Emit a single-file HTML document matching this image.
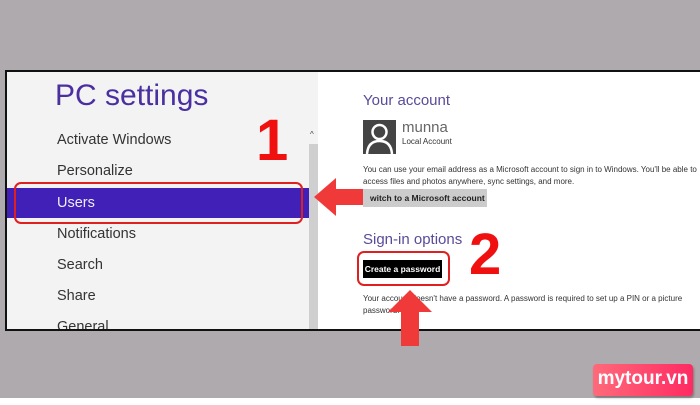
<!DOCTYPE html><html><head><style>
body{margin:0;width:700px;height:405px;background:#afaaae;position:relative;overflow:hidden;font-family:"Liberation Sans",sans-serif}
.a{position:absolute}
</style></head><body>
<div class="a" style="left:0;top:398px;width:700px;height:7px;background:#fff"></div>
<div class="a" style="left:5px;top:70px;width:695px;height:261px;border:2px solid #111;border-right:none;background:#fff;box-sizing:border-box"></div>
<div class="a" style="left:7px;top:72px;width:311px;height:257px;background:#f3f3f3"></div>
<div class="a" style="left:309px;top:144px;width:9px;height:185px;background:#cfcfcf"></div>
<div class="a" style="left:310px;top:130px;font-size:8px;color:#444">^</div>
<div class="a" style="left:55px;top:79px;font-size:30px;color:#4a2fa0">PC settings</div>
<div class="a" style="left:7px;top:188px;width:302px;height:30px;background:#4120b8"></div>
<div class="a" style="left:14px;top:182px;width:289px;height:42px;border:2px solid #e02020;border-radius:7px;box-sizing:border-box"></div>
<div class="a" style="left:57px;top:133px;font-size:14.5px;color:#333;line-height:1">Activate Windows</div>
<div class="a" style="left:57px;top:164px;font-size:14.5px;color:#333;line-height:1">Personalize</div>
<div class="a" style="left:57px;top:196px;font-size:14.5px;color:#eee;line-height:1">Users</div>
<div class="a" style="left:57px;top:227px;font-size:14.5px;color:#333;line-height:1">Notifications</div>
<div class="a" style="left:57px;top:258px;font-size:14.5px;color:#333;line-height:1">Search</div>
<div class="a" style="left:57px;top:289px;font-size:14.5px;color:#333;line-height:1">Share</div>
<div class="a" style="left:57px;top:320px;font-size:14.5px;color:#333;line-height:1;height:9px;overflow:hidden">General</div>
<div class="a" style="left:256px;top:112px;font-size:58px;font-weight:bold;color:#f01010;line-height:1">1</div>
<div class="a" style="left:469px;top:226px;font-size:58px;font-weight:bold;color:#f01010;line-height:1">2</div>
<svg class="a" style="left:312px;top:176px" width="62" height="42"><polygon points="2,21 24,2 24,13 60,13 60,29 24,29 24,40" fill="#f03a3a"/></svg>
<div class="a" style="left:363px;top:92px;font-size:15px;color:#5a4a9a">Your account</div>
<svg class="a" style="left:363px;top:120px" width="33" height="34"><rect width="33" height="34" fill="#444"/><circle cx="16.5" cy="12" r="7" fill="none" stroke="#fff" stroke-width="2.5"/><path d="M4 34 Q5 21 16.5 21 Q28 21 29 34" fill="none" stroke="#fff" stroke-width="2.5"/></svg>
<div class="a" style="left:402px;top:119px;font-size:15px;color:#666">munna</div>
<div class="a" style="left:402px;top:137px;font-size:8px;color:#333">Local Account</div>
<div class="a" style="left:363px;top:164px;font-size:8px;color:#333;line-height:12px;width:340px">You can use your email address as a Microsoft account to sign in to Windows. You'll be able to access files and photos anywhere, sync settings, and more.</div>
<div class="a" style="left:363px;top:189px;width:124px;height:18px;background:#ccc;font-size:8.5px;font-weight:bold;color:#222;line-height:18px;padding-left:7px;box-sizing:border-box">witch to a Microsoft account</div>
<div class="a" style="left:363px;top:231px;font-size:15px;color:#5a4a9a">Sign-in options</div>
<div class="a" style="left:357px;top:251px;width:93px;height:35px;border:2px solid #e02020;border-radius:7px;box-sizing:border-box"></div>
<div class="a" style="left:363px;top:260px;width:79px;height:18px;background:#000;color:#fff;font-size:8.5px;font-weight:bold;line-height:18px;text-align:center">Create a password</div>
<div class="a" style="left:363px;top:293px;font-size:8px;color:#333;line-height:12px;width:330px">Your account doesn't have a password. A password is required to set up a PIN or a picture password.</div>
<svg class="a" style="left:386px;top:288px" width="48" height="60"><polygon points="24,2 46,24 33,24 33,58 15,58 15,24 2,24" fill="#f03a3a"/></svg>
<div class="a" style="left:593px;top:364px;width:100px;height:32px;border-radius:4px;background:linear-gradient(90deg,#ff6a7a,#ff2a62);color:#fff;font-size:19px;font-weight:bold;line-height:30px;text-align:center;box-shadow:1px 2px 2px rgba(0,0,0,.3)">mytour.vn</div>
</body></html>
